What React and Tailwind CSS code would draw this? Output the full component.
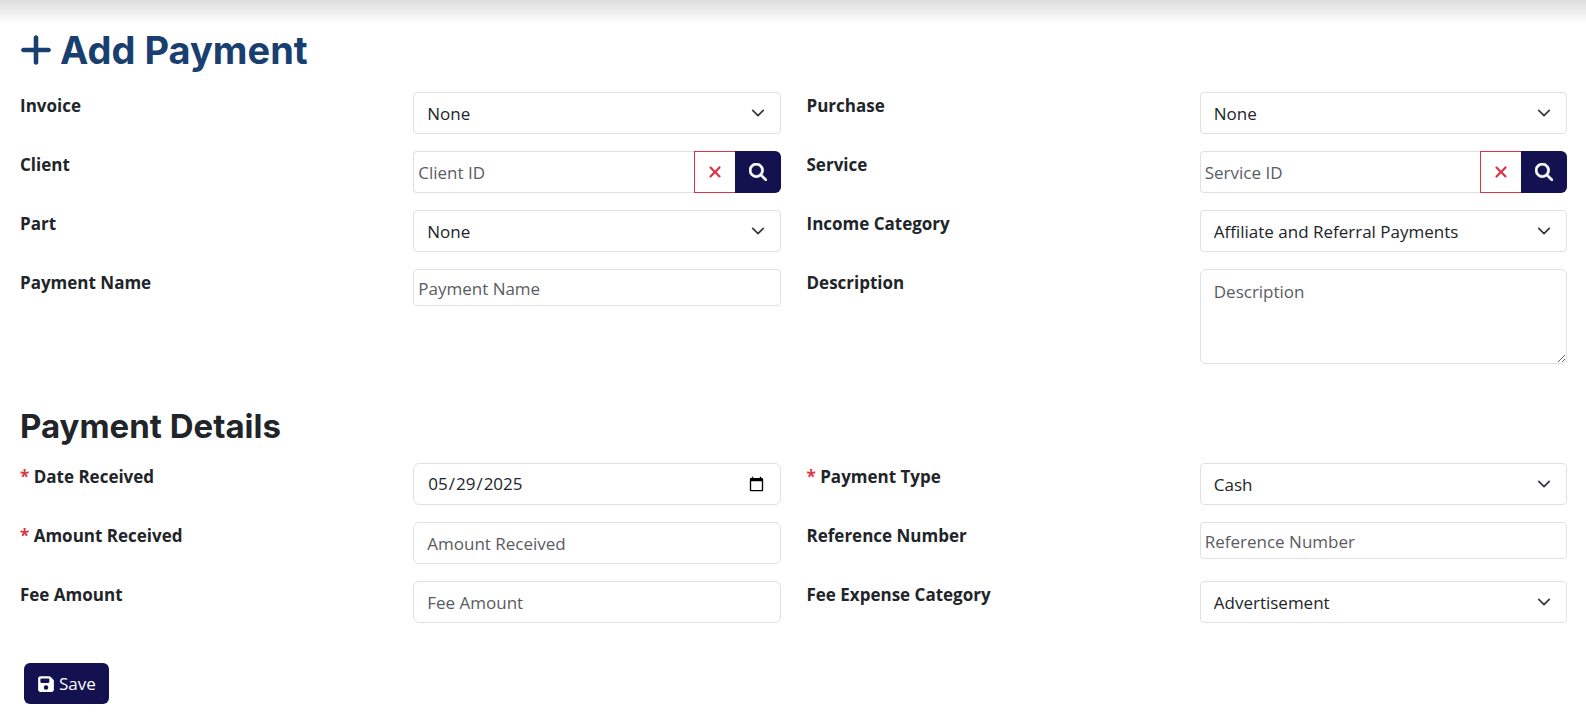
import React, { useState } from "react";
import { FaFloppyDisk, FaMagnifyingGlass, FaPlus, FaXmark } from "react-icons/fa6";

const boxClass = "block w-full border border-[#dee2e6] bg-white text-[#212529] placeholder-[#595c5f]";

function Field({ id, label, required, children }) {
    return (
        <div className="grid grid-cols-2 gap-x-[26px]">
            <label htmlFor={id} className="self-start font-bold leading-7">
                {required && <span className="text-[#dc3545]">* </span>}
                {label}
            </label>
            <div className="min-w-0">{children}</div>
        </div>
    );
}

function SelectBox({ id, options }) {
    return (
        <div className="relative">
            <select id={id} className={`${boxClass} h-[42px] appearance-none rounded pl-[13px] pr-10 pt-px`}>
                {options.map((option) => (
                    <option key={option}>{option}</option>
                ))}
            </select>
            <svg
                viewBox="0 0 16 16"
                className="pointer-events-none absolute right-4 top-[14px] h-[14px] w-[14px]"
                fill="none"
                stroke="#343a40"
                strokeWidth="2"
                strokeLinecap="round"
                strokeLinejoin="round"
            >
                <path d="m2 5 6 6 6-6" />
            </svg>
        </div>
    );
}

function SearchBox({ id, placeholder }) {
    const [value, setValue] = useState("");

    return (
        <div className="flex h-[42px]">
            <input
                id={id}
                type="text"
                value={value}
                onChange={(e) => setValue(e.target.value)}
                placeholder={placeholder}
                className="min-w-0 flex-1 rounded-l border border-r-0 border-[#dee2e6] px-1 pt-px placeholder-[#595c5f]"
            />
            <button
                type="button"
                aria-label="Clear"
                onClick={() => setValue("")}
                className="flex w-[41px] items-center justify-center border border-r-0 border-[#dc3545] text-[#dc3545]"
            >
                <FaXmark className="h-[18px] w-[18px]" />
            </button>
            <button
                type="button"
                aria-label="Search"
                className="flex w-[46px] items-center justify-center rounded-r-md bg-[#131150] text-white"
            >
                <FaMagnifyingGlass className="h-[18px] w-[18px]" strokeWidth="16" />
            </button>
        </div>
    );
}

export default function App() {
    const [date, setDate] = useState("2025-05-29");

    return (
        <div className="bg-white font-['Open_Sans',sans-serif] text-[17px] text-[#212529]">
            <div className="h-6 bg-gradient-to-b from-[#dddddd] to-white" />

            <form onSubmit={(e) => e.preventDefault()} className="pb-5 pl-5 pr-[19px]">
                <h1 className="flex h-[52px] items-center gap-2 font-[Inter,sans-serif] text-[38px] font-bold text-[#183f70]">
                    <FaPlus className="h-[38px] w-8" />
                    Add Payment
                </h1>

                <div className="mt-4 grid grid-cols-2 gap-x-[26px] gap-y-[17px]">
                    <Field id="invoice" label="Invoice">
                        <SelectBox id="invoice" options={["None"]} />
                    </Field>
                    <Field id="purchase" label="Purchase">
                        <SelectBox id="purchase" options={["None"]} />
                    </Field>
                    <Field id="client" label="Client">
                        <SearchBox id="client" placeholder="Client ID" />
                    </Field>
                    <Field id="service" label="Service">
                        <SearchBox id="service" placeholder="Service ID" />
                    </Field>
                    <Field id="part" label="Part">
                        <SelectBox id="part" options={["None"]} />
                    </Field>
                    <Field id="income" label="Income Category">
                        <SelectBox id="income" options={["Affiliate and Referral Payments"]} />
                    </Field>
                    <Field id="name" label="Payment Name">
                        <input id="name" type="text" placeholder="Payment Name" className={`${boxClass} h-[37px] rounded px-1 pt-px`} />
                    </Field>
                    <Field id="description" label="Description">
                        <textarea
                            id="description"
                            placeholder="Description"
                            className={`${boxClass} h-[95px] resize-y rounded-md px-[13px] py-2 leading-7`}
                        />
                    </Field>
                </div>

                {/* Payment details */}
                <h2 className="mt-10 flex h-11 items-center pt-0.5 font-[Inter,sans-serif] text-[33px] font-bold">Payment Details</h2>

                <div className="mt-[15px] grid grid-cols-2 gap-x-[26px] gap-y-[17px]">
                    <Field id="date" label="Date Received" required>
                        <input
                            id="date"
                            type="date"
                            value={date}
                            onChange={(e) => setDate(e.target.value)}
                            className={`${boxClass} h-[42px] rounded-md px-[13px]`}
                        />
                    </Field>
                    <Field id="type" label="Payment Type" required>
                        <SelectBox id="type" options={["Cash"]} />
                    </Field>
                    <Field id="amount" label="Amount Received" required>
                        <input id="amount" type="text" placeholder="Amount Received" className={`${boxClass} h-[42px] rounded-md px-[13px]`} />
                    </Field>
                    <Field id="reference" label="Reference Number">
                        <input id="reference" type="text" placeholder="Reference Number" className={`${boxClass} h-[37px] rounded px-1 pt-px`} />
                    </Field>
                    <Field id="fee" label="Fee Amount">
                        <input id="fee" type="text" placeholder="Fee Amount" className={`${boxClass} h-[42px] rounded-md px-[13px]`} />
                    </Field>
                    <Field id="expense" label="Fee Expense Category">
                        <SelectBox id="expense" options={["Advertisement"]} />
                    </Field>
                </div>

                <button
                    type="submit"
                    className="ml-1 mt-10 flex h-[41px] items-center gap-1 rounded-md bg-[#131150] px-[13px] text-white"
                >
                    <FaFloppyDisk className="h-[18px] w-[18px]" />
                    Save
                </button>
            </form>
        </div>
    );
}
